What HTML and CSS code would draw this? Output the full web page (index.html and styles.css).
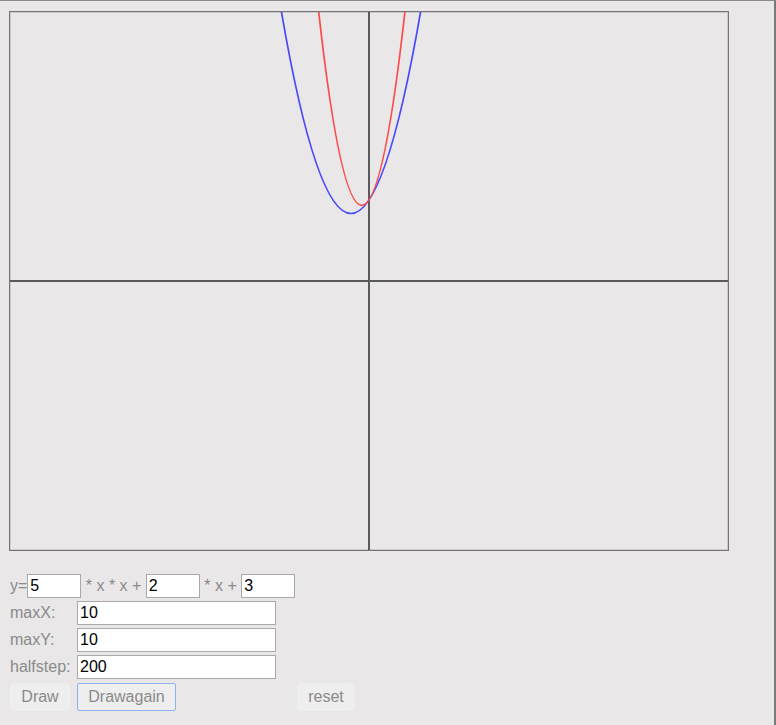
FILE: index.html
```html
<!DOCTYPE html>
<html>
<head>
<meta charset="utf-8">
<title>Quadratic plot</title>
<link rel="stylesheet" href="styles.css">
</head>
<body>
<div class="page">
  <div class="plot">
    <svg class="plot-svg" width="720" height="540" viewBox="0 0 720 540" xmlns="http://www.w3.org/2000/svg">
      <defs>
        <clipPath id="inner"><rect x="1" y="1" width="718" height="538"/></clipPath>
      </defs>
      <rect x="0.5" y="0.5" width="719" height="539" fill="none" stroke="#747474"/>
      <rect x="1.5" y="1.5" width="717" height="537" fill="none" stroke="#cbc9ca"/>
      <g clip-path="url(#inner)">
        <line x1="360" y1="0" x2="360" y2="540" stroke="#5a5a5a" stroke-width="2"/>
        <line x1="0" y1="270" x2="720" y2="270" stroke="#5a5a5a" stroke-width="2"/>
        <path d="M270 -13.5 Q342 418.5 414 -13.5" fill="none" stroke="#4848ff" stroke-width="1.7"/>
        <path d="M306 -33.75 Q352.8 422.55 399.6 -33.75" fill="none" stroke="#ff4848" stroke-width="1.7"/>
      </g>
    </svg>
  </div>
  <div class="controls">
    <div class="eq">y=<input class="coef" type="text" value="5"> * x * x + <input class="coef" type="text" value="2"> * x + <input class="coef" type="text" value="3"></div>
    <div class="params">
      <label class="lbl">maxX:</label><input class="wide" type="text" value="10">
      <label class="lbl">maxY:</label><input class="wide" type="text" value="10">
      <label class="lbl">halfstep:</label><input class="wide" type="text" value="200">
    </div>
    <div class="buttons">
      <button class="btn btn-draw">Draw</button>
      <button class="btn btn-again">Drawagain</button>
      <button class="btn btn-reset">reset</button>
    </div>
  </div>
</div>
</body>
</html>
```
FILE: styles.css
```css
html {
  background: #e9e7e8;
}
body {
  margin: 0;
  width: 776px;
  height: 725px;
  box-sizing: border-box;
  border-top: 1px solid #8a8a8a;
  border-right: 2px solid #7a7a7a;
  background: #e9e7e8;
  font-family: "Liberation Sans", Arial, sans-serif;
  font-size: 16px;
  color: #8a8a8a;
  overflow: hidden;
}
.page {
  display: flex;
  flex-direction: column;
}
.plot {
  margin: 10px 0 0 9px;
  width: 720px;
  height: 540px;
}
.plot-svg {
  display: block;
}
.controls {
  margin-top: 23px;
  padding-left: 10px;
  display: flex;
  flex-direction: column;
}
.eq {
  height: 24px;
  line-height: 24px;
  white-space: nowrap;
}
input {
  font-family: "Liberation Sans", Arial, sans-serif;
  font-size: 16px;
  color: #000;
  background: #fff;
  border: 1px solid #a9a9a9;
  border-radius: 0;
  height: 24px;
  box-sizing: border-box;
  padding: 0 2px;
  margin: 0;
  outline: none;
}
.coef {
  width: 54px;
  vertical-align: top;
}
.params {
  margin-top: 3px;
  display: grid;
  grid-template-columns: 67px 199px;
  row-gap: 3px;
}
.lbl {
  line-height: 24px;
  height: 24px;
}
.wide {
  width: 199px;
}
.buttons {
  margin-top: 4px;
  display: flex;
  align-items: flex-start;
}
.btn {
  font-family: "Liberation Sans", Arial, sans-serif;
  font-size: 16px;
  color: #8a8a8a;
  background: #efeeee;
  border: 1px solid #efeeee;
  border-radius: 4px;
  height: 28px;
  box-sizing: border-box;
  padding: 0;
  margin: 0;
}
.btn-draw {
  width: 60px;
}
.btn-again {
  width: 99px;
  margin-left: 7px;
  border-color: #8db3f2;
  border-radius: 2px;
}
.btn-reset {
  width: 58px;
  margin-left: 121px;
}
```
